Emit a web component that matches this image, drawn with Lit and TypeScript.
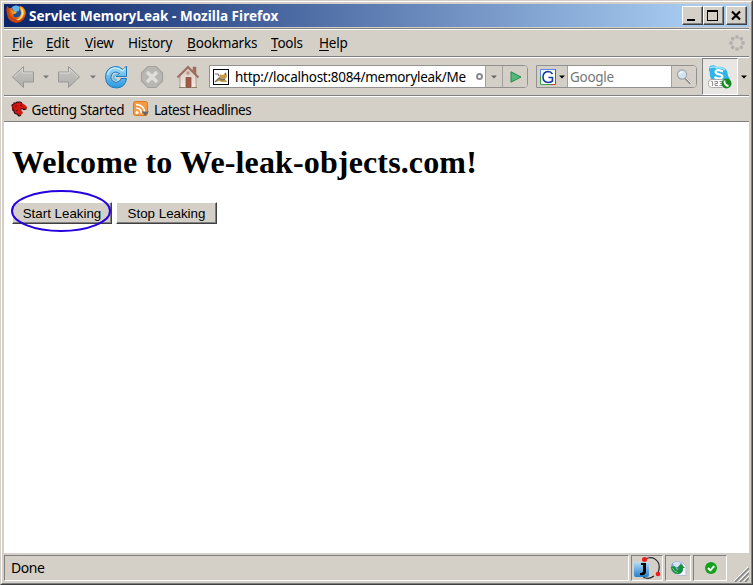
import { LitElement, html, css, svg } from "lit";
import { customElement } from "lit/decorators.js";

const MENU = [
  ["", "F", "ile", "file"], ["", "E", "dit", "edit"], ["", "V", "iew", "view"],
  ["Hi", "s", "tory", "history"], ["", "B", "ookmarks", "bookmarks"],
  ["", "T", "ools", "tools"], ["", "H", "elp", "help"],
];

const firefox = html`<svg class="fox" width="21" height="20" viewBox="0 0 21 20">
  <defs><radialGradient id="ff" cx=".6" cy=".3"><stop offset="0" stop-color="#ffd84a"/><stop offset=".6" stop-color="#f58a1d"/><stop offset="1" stop-color="#c9420c"/></radialGradient></defs>
  <circle cx="10.5" cy="8" r="7.500" fill="#1b4f96"/>
  <path d="M6 2Q10-1 14 2L13 6L9 7L7 5Z" fill="#63b5e8"/>
  <path d="M1 1L3 3L6 3L7 6L11 7L9 9L7 9L8 12Q11 13 14 11Q16 8 14 4L14 1Q19 2 20 8Q19 17 10.500 18Q2 17 1 9Q0 4 1 1Z" fill="url(#ff)"/>
  <path d="M15 2Q19 6 17 11Q15 16 10 15Q15 13 16 8Z" fill="#ffe07a"/>
</svg>`;

const arrow = (flip: boolean) => html`<svg width="24" height="24" viewBox="0 0 24 24">
  <defs><linearGradient id="ar" x2="0" y2="1"><stop offset="0" stop-color="#c9c8c5"/><stop offset="1" stop-color="#aeadaa"/></linearGradient></defs>
  <g transform=${flip ? "translate(24 0) scale(-1 1)" : ""}>
  <path d="M1.500 12L12.500 1.500V7H22.500V17H12.500V22.500Z" fill="url(#ar)" stroke="#999895" stroke-linejoin="round"/>
  <path d="M3 12L11.500 3.800V8H21.500" fill="none" stroke="#d9d8d5"/></g>
</svg>`;

const reload = html`<svg width="24" height="24" viewBox="0 0 24 24">
  <defs><linearGradient id="rl" x2="0" y2="1"><stop offset="0" stop-color="#a5dcf8"/><stop offset="1" stop-color="#2498df"/></linearGradient></defs>
  <path d="M22.500 1V11.500H12L15.500 8.500Q11 5.500 8 9Q5.500 13 8.500 16Q12 19 15.500 16Q16.500 15 17 13.500H22.500Q21.500 22.500 12.500 23Q2 22.500 1.500 12.500Q1.500 3 10.500 1.500Q15.500 1 19 4.500Z" fill="url(#rl)" stroke="#2479ba" stroke-linejoin="round"/>
  <path d="M3.500 10Q5 4 11 3Q15 3 18.500 6L21 3.500" fill="none" stroke="#c8edff" stroke-width="1.200"/>
  <path d="M14 9.500Q10 9.500 9.500 12.500Q10 15 13 15" fill="none" stroke="#69bee9" stroke-width="2"/>
</svg>`;

const stop = html`<svg width="24" height="24" viewBox="0 0 24 24">
  <path d="M8 1.500H16L22.500 8V16L16 22.500H8L1.500 16V8Z" fill="#b8b7b4" stroke="#a4a3a0" stroke-width="1.200"/>
  <path d="M7 7L17 17M17 7L7 17" stroke="#dfded9" stroke-width="3.500"/>
</svg>`;

const home = html`<svg width="24" height="24" viewBox="0 0 24 24">
  <defs><linearGradient id="hw" x2="0" y2="1"><stop offset="0" stop-color="#d8c6ba"/><stop offset="1" stop-color="#f4ece5"/></linearGradient></defs>
  <path d="M17 2H20V9H17Z" fill="#aa6a55" stroke="#9c7367" stroke-width=".6"/>
  <path d="M4 11L12 3L20 11V22.500H4Z" fill="url(#hw)" stroke="#a58d7d" stroke-width=".8"/>
  <path d="M1.500 12.500L12 2L22.500 12.500" fill="none" stroke="#9b7060" stroke-width="2"/>
  <path d="M10 12.500H15V22.500H10Z" fill="#a65743" stroke="#79584b" stroke-width=".8"/>
  <rect x="10.500" y="6.500" width="3" height="3" fill="#b69b8b"/>
  <path d="M3 22.500H9M16 22.500H21" stroke="#8e8066"/>
</svg>`;

const caret = (c: string) => html`<svg width="6" height="4" viewBox="0 0 6 4"><path d="M0 .5H6L3 3.500Z" fill=${c}/></svg>`;

const page = html`<svg width="16" height="16" viewBox="0 0 16 16">
  <rect x=".5" y=".5" width="15" height="15" fill="#fff" stroke="#000"/>
  <path d="M7 5L8.500 6L11 5.500L13 3L14 8L12 10L14 13H9L6 12L3 13L6 9Z" fill="#c79a4b"/>
  <path d="M2 5H5L6 7M2 13L6 9L9 11L12 10M12 4L13 6" fill="none" stroke="#74716c" stroke-width="1.200"/>
</svg>`;

const dragon = html`<svg width="17" height="16" viewBox="0 0 17 16">
  <path d="M1 4L3 3L3 2L5 2L6 1L9 1L11 2L14 4L16 6L15.500 8L13 8.500L11 7.500L9.500 8.500L11 10L12 12L10 14L8 15L6 13L4 12.500L3 10L1 9L1 7Z" fill="#d51714"/>
  <path d="M9.500 8.500L11 7.500L13 8.500L15.500 8M11 2L9 1H6L5 2H3V3L1 4V5.500M1 7H3M1 9H3V10.500L4 12.500L6 13L8 15L10 14" fill="none" stroke="#301010" stroke-width="1.200"/>
  <path d="M4 6L6 4.500M5 10L7 9M9 4L11 5" stroke="#6d0808" fill="none"/>
</svg>`;

const rss = html`<svg width="16" height="16" viewBox="0 0 16 16">
  <rect x=".5" y=".5" width="14" height="14" rx="2" fill="#f39a42" stroke="#d97b24"/>
  <circle cx="4" cy="11.500" r="1.500" fill="#fff"/>
  <path d="M3 7Q8 7 8.500 12.500M3 3.500Q11.500 4 12 12.500" fill="none" stroke="#fff" stroke-width="1.700"/>
  <path d="M8.500 10.500H16L12.200 15Z" fill="#666"/>
</svg>`;

const throbber = html`<svg width="16" height="16" viewBox="0 0 16 16">
  ${[0, 45, 90, 135, 180, 225, 270, 315].map((a) => svg`<circle cx="8" cy="1.900" r="1.900" fill="#b3b1ae" transform="rotate(${a} 8 8)"/>`)}
</svg>`;

const google = html`<svg width="16" height="16" viewBox="0 0 16 16">
  <rect width="16" height="16" fill="#fff"/><path d="M.5 7V.5H15" fill="none" stroke="#5c87ea"/>
  <path d="M15.500 0V12" stroke="#d53131"/><path d="M.5 7V15.500H11" stroke="#36a145" fill="none"/><path d="M11 15.500H15.500V11" stroke="#d53131" fill="none"/>
  <path d="M12.500 5Q11 2.500 8 2.500Q3 3 3 8Q3 13 8 13.500Q10.500 13.500 12.500 12V8.500H8.500" fill="none" stroke="#173f9f" stroke-width="1.600"/>
</svg>`;

const magnifier = html`<svg width="16" height="16" viewBox="0 0 16 16">
  <path d="M9 9L14.500 14.500" stroke="#8d8d8d" stroke-width="2.400"/><path d="M10 9L15 14" stroke="#e8e8e8"/>
  <circle cx="6" cy="5.500" r="4.600" fill="#d3e3ee" stroke="#a2a6aa" stroke-width="1.200"/>
  <path d="M3.500 5Q4 3 6.500 3" stroke="#fff" stroke-width="1.500" fill="none"/>
</svg>`;

const skype = html`<svg width="24" height="24" viewBox="0 0 24 24">
  <path d="M2 1Q6-1 9 2Q16 1 19 6Q20 9 20 11Q23 14 21 16H4Q1 10 2 8Q0 4 2 1Z" fill="#2fb4ea"/>
  <path d="M2 3Q5 1 9 3Q14 2 17 5" stroke="#a0e4ff" stroke-width="1.500" fill="none"/>
  <path d="M15 6.500Q8 3.500 7.500 7Q8 9 12 9.500Q16 11 13.500 13Q10 14.500 6.500 12" stroke="#fff" stroke-width="2.200" fill="none"/>
  <rect x=".5" y="14.500" width="17" height="8" rx="3" fill="#fafafa" stroke="#aaa"/>
  <path d="M3 16.500H4.500V21M6.500 16.500H9.500V18.500H7V20.500H10M11.500 16.500H14.500V20.500H11.500M12 18.500H14" stroke="#777" stroke-width=".8" fill="none"/>
  <circle cx="18.500" cy="18.500" r="5" fill="#148a20"/><path d="M16.500 15.500Q16 20 20.500 21" stroke="#fff" stroke-width="1.800" fill="none"/>
</svg>`;

const jIcon = html`<svg width="29" height="24" viewBox="0 0 29 24">
  <defs><linearGradient id="jb" x2="0" y2="1"><stop offset="0" stop-color="#b8dcf5"/><stop offset="1" stop-color="#237fc9"/></linearGradient></defs>
  <rect x="1" y="6" width="15" height="15" rx="2" fill="url(#jb)"/>
  <path d="M12 3Q20-1 25 6Q28 12 24 18M21 20Q16 24 10 21" fill="none" stroke="#29292d" stroke-width="1.200"/>
  <path d="M8 7H13V16Q12 20 7 19V17Q10 17 10 15V9H8Z" fill="#000"/>
  <circle cx="11.500" cy="3.500" r="2.500" fill="#ee1919"/><circle cx="25" cy="18" r="2.300" fill="#ee1919"/>
</svg>`;

const proxy = html`<svg width="17" height="17" viewBox="0 0 17 17">
  <path d="M8 3H13L16 6V15.500H8Z" fill="#f4f5ff" stroke="#b9bcd8"/>
  <circle cx="7" cy="7.500" r="6.300" fill="#7d9fd0"/><path d="M3 3Q7 0 11 3L8 7H4Z" fill="#d5e3f4"/>
  <path d="M1 7L5 6L6 9Q7 11 9 9L7 8L11 4L15 8H13Q13 14 8 14Q2 14 1 7Z" fill="#14923b"/>
  <path d="M2.500 8Q4 12 8 12.500" stroke="#68cd76" fill="none"/>
</svg>`;

const ok = html`<svg width="12" height="12" viewBox="0 0 12 12"><circle cx="6" cy="6" r="6" fill="#13a01b"/><path d="M3 6L5.300 8.300L9.300 4" stroke="#fff" stroke-width="1.900" fill="none"/></svg>`;

@customElement("app-root")
export class AppRoot extends LitElement {
  static styles = css`
    :host { display: block; width: 753px; height: 585px; }
    * { box-sizing: border-box; }
    svg { display: block; flex: none; }
    .window { height: 585px; background: #d4d0c8; border: solid; border-width: 1px; border-color: #d4d0c8 #404040 #404040 #d4d0c8; font: 14px/18px "Noto Sans", sans-serif; color: #000; }
    .frame { height: 583px; border: 1px solid; border-color: #fff #808080 #808080 #fff; padding: 2px 2px 1px 2px; display: flex; flex-direction: column; }
    .title { height: 23px; display: flex; align-items: center; background: linear-gradient(90deg, #0a246a, #a6caf0 92%); color: #fff; font-weight: 700; padding: 0 2px 0 2px; white-space: nowrap; }
    .fox { margin: 0 2px 2px 0; }
    .caption { flex: 1; letter-spacing: .035px; font-size: 13.500px; }
    .ctl { width: 21px; height: 19px; background: #d4d0c8; border: 1px solid; border-color: #fff #404040 #404040 #fff; box-shadow: inset -1px -1px #808080; }
    .ctl.close { margin-left: 2px; }
    .ctl svg { width: 18px; height: 17px; }
    .bar { display: flex; align-items: center; border-bottom: 1px solid #808080; border-top: 1px solid #fff; white-space: nowrap; }
    .menu { height: 29px; border-top-color: #808080; margin-top: 1px; box-shadow: inset 0 1px #fff; padding: 0 4px 0 8px; }
    .item { flex: none; letter-spacing: -.2px; font-size: 13.500px; }
    .item u { text-underline-offset: 2px; text-decoration-thickness: 1px; }
    .file { width: 34px; } .edit { width: 39px; } .view { width: 43px; } .history { width: 59px; } .bookmarks { width: 84px; letter-spacing: -.15px; } .tools { width: 48px; } .help { flex: 1; }
    .nav { height: 39px; padding-left: 7px; }
    .back { margin-right: 8px; } .fwd { margin: 0 9px 0 8px; }
    .reload { margin-left: 8px; } .stop { margin-left: 12px; } .home { margin-left: 12px; }
    .field { height: 23px; display: flex; align-items: center; border: 1px solid #91928f; border-radius: 0 4px 4px 0; background: #fff; overflow: hidden; flex: none; }
    .url { width: 319px; margin-left: 9px; padding-left: 3px; }
    .address { width: 233px; margin-left: 6px; font-size: 13.500px; letter-spacing: -.29px; }
    .dot { margin-left: 8px; flex: none; width: 7px; height: 7px; border: 2px solid #8c8c8c; border-radius: 50%; }
    .cell { height: 21px; display: flex; align-items: center; justify-content: center; background: #d4d0c8; border-left: 1px solid #a2a19e; flex: none; }
    .drop { width: 17px; margin-left: auto; } .go { width: 25px; padding-left: 2px; }
    .search { width: 161px; margin-left: 8px; }
    .engine { width: 31px; border-left: 0; border-right: 1px solid #a2a19e; gap: 3px; }
    .hint { color: #777; flex: 1; padding-left: 2px; font-size: 13.500px; letter-spacing: -.3px; }
    .find { width: 25px; }
    .skype { width: 36px; height: 37px; border: 1px solid; border-color: #808080 #fff #fff #808080; background: #e9e7e3; margin-left: 5px; display: flex; align-items: center; justify-content: center; }
    .more { margin-left: 3px; }
    .marks { height: 26px; padding-left: 7px; }
    .mark { letter-spacing: -.28px; font-size: 13.500px; padding-top: 1px; }
    .started { width: 101px; margin-left: 3.500px; } .latest { margin-left: 5.500px; letter-spacing: -.48px; }
    .page { flex: 1; background: #fff; padding: 22px 8px; overflow: hidden; }
    h1 { font: 700 32px/36px "Liberation Serif", serif; letter-spacing: .14px; margin: 0 0 22px; white-space: nowrap; }
    .buttons { display: flex; gap: 4px; }
    .wrap { position: relative; }
    .btn { display: block; width: 101px; height: 22px; padding: 0; font: 13.333px/19px "Liberation Sans", sans-serif; background: #d4d0c8; border: 1px solid; border-color: #fff #404040 #404040 #fff; border-radius: 0; box-shadow: inset -1px -1px #808080; color: #000; }
    .wrap .btn { width: 100px; }
    .ring { position: absolute; left: -1px; top: -12px; pointer-events: none; }
    .status { height: 29px; display: flex; align-items: flex-start; padding-top: 2px; gap: 2px; }
    .panel { height: 26px; border: 1px solid; border-color: #808080 #fff #fff #808080; display: flex; align-items: center; justify-content: center; }
    .done { flex: 1; justify-content: flex-start; padding-left: 6px; letter-spacing: -.45px; }
    .p1 { width: 32px; } .p2 { width: 26px; } .p3 { width: 34px; padding-left: 2px; }
    .grip { align-self: flex-end; margin-left: 5px; }
  `;

  render() {
    return html`<div class="window"><div class="frame">
      <div class="title">${firefox}<span class="caption">Servlet MemoryLeak - Mozilla Firefox</span>
        <div class="ctl"><svg viewBox="0 0 18 17"><path d="M4 12H12V14H4Z"/></svg></div>
        <div class="ctl"><svg viewBox="0 0 18 17"><path d="M3 3H14V14H3ZM4 5V13H13V5Z" fill-rule="evenodd"/></svg></div>
        <div class="ctl close"><svg viewBox="0 0 18 17"><path d="M5 4.500L13 12.500M13 4.500L5 12.500" stroke="#000" stroke-width="2.200"/></svg></div>
      </div>
      <div class="bar menu">${MENU.map(([a, k, b, c]) => html`<span class="item ${c}">${a}<u>${k}</u>${b}</span>`)}${throbber}</div>
      <div class="bar nav">
        <div class="back">${arrow(false)}</div>${caret("#777")}<div class="fwd">${arrow(true)}</div>${caret("#777")}
        <div class="reload">${reload}</div><div class="stop">${stop}</div><div class="home">${home}</div>
        <div class="field url">${page}<span class="address">http://localhost:8084/memoryleak/Me</span><span class="dot"></span>
          <div class="cell drop">${caret("#666")}</div>
          <div class="cell go"><svg width="12" height="12" viewBox="0 0 12 12"><path d="M1 .8L11 6L1 11.200Z" fill="#56b779" stroke="#288b4b"/></svg></div>
        </div>
        <div class="field search"><div class="cell engine">${google}${caret("#000")}</div><span class="hint">Google</span><div class="cell find">${magnifier}</div></div>
        <div class="skype">${skype}</div><div class="more">${caret("#000")}</div>
      </div>
      <div class="bar marks">${dragon}<span class="mark started">Getting Started</span>${rss}<span class="mark latest">Latest Headlines</span></div>
      <div class="page">
        <h1>Welcome to We-leak-objects.com!</h1>
        <div class="buttons">
          <div class="wrap"><button class="btn">Start Leaking</button>
            <svg class="ring" width="101" height="43" viewBox="0 0 101 43"><ellipse cx="50" cy="21" rx="49" ry="20" fill="none" stroke="#2500e0" stroke-width="2"/></svg></div>
          <button class="btn">Stop Leaking</button>
        </div>
      </div>
      <div class="status">
        <div class="panel done">Done</div><div class="panel p1">${jIcon}</div><div class="panel p2">${proxy}</div><div class="panel p3">${ok}</div>
        <svg class="grip" width="15" height="15" viewBox="0 0 15 15"><path d="M1 15L15 1M6 15L15 6M11 15L15 11" stroke="#808080" stroke-width="1.500"/><path d="M0 14L14 0M5 14L15 4M10 14L15 9" stroke="#fff"/></svg>
      </div>
    </div></div>`;
  }
}
